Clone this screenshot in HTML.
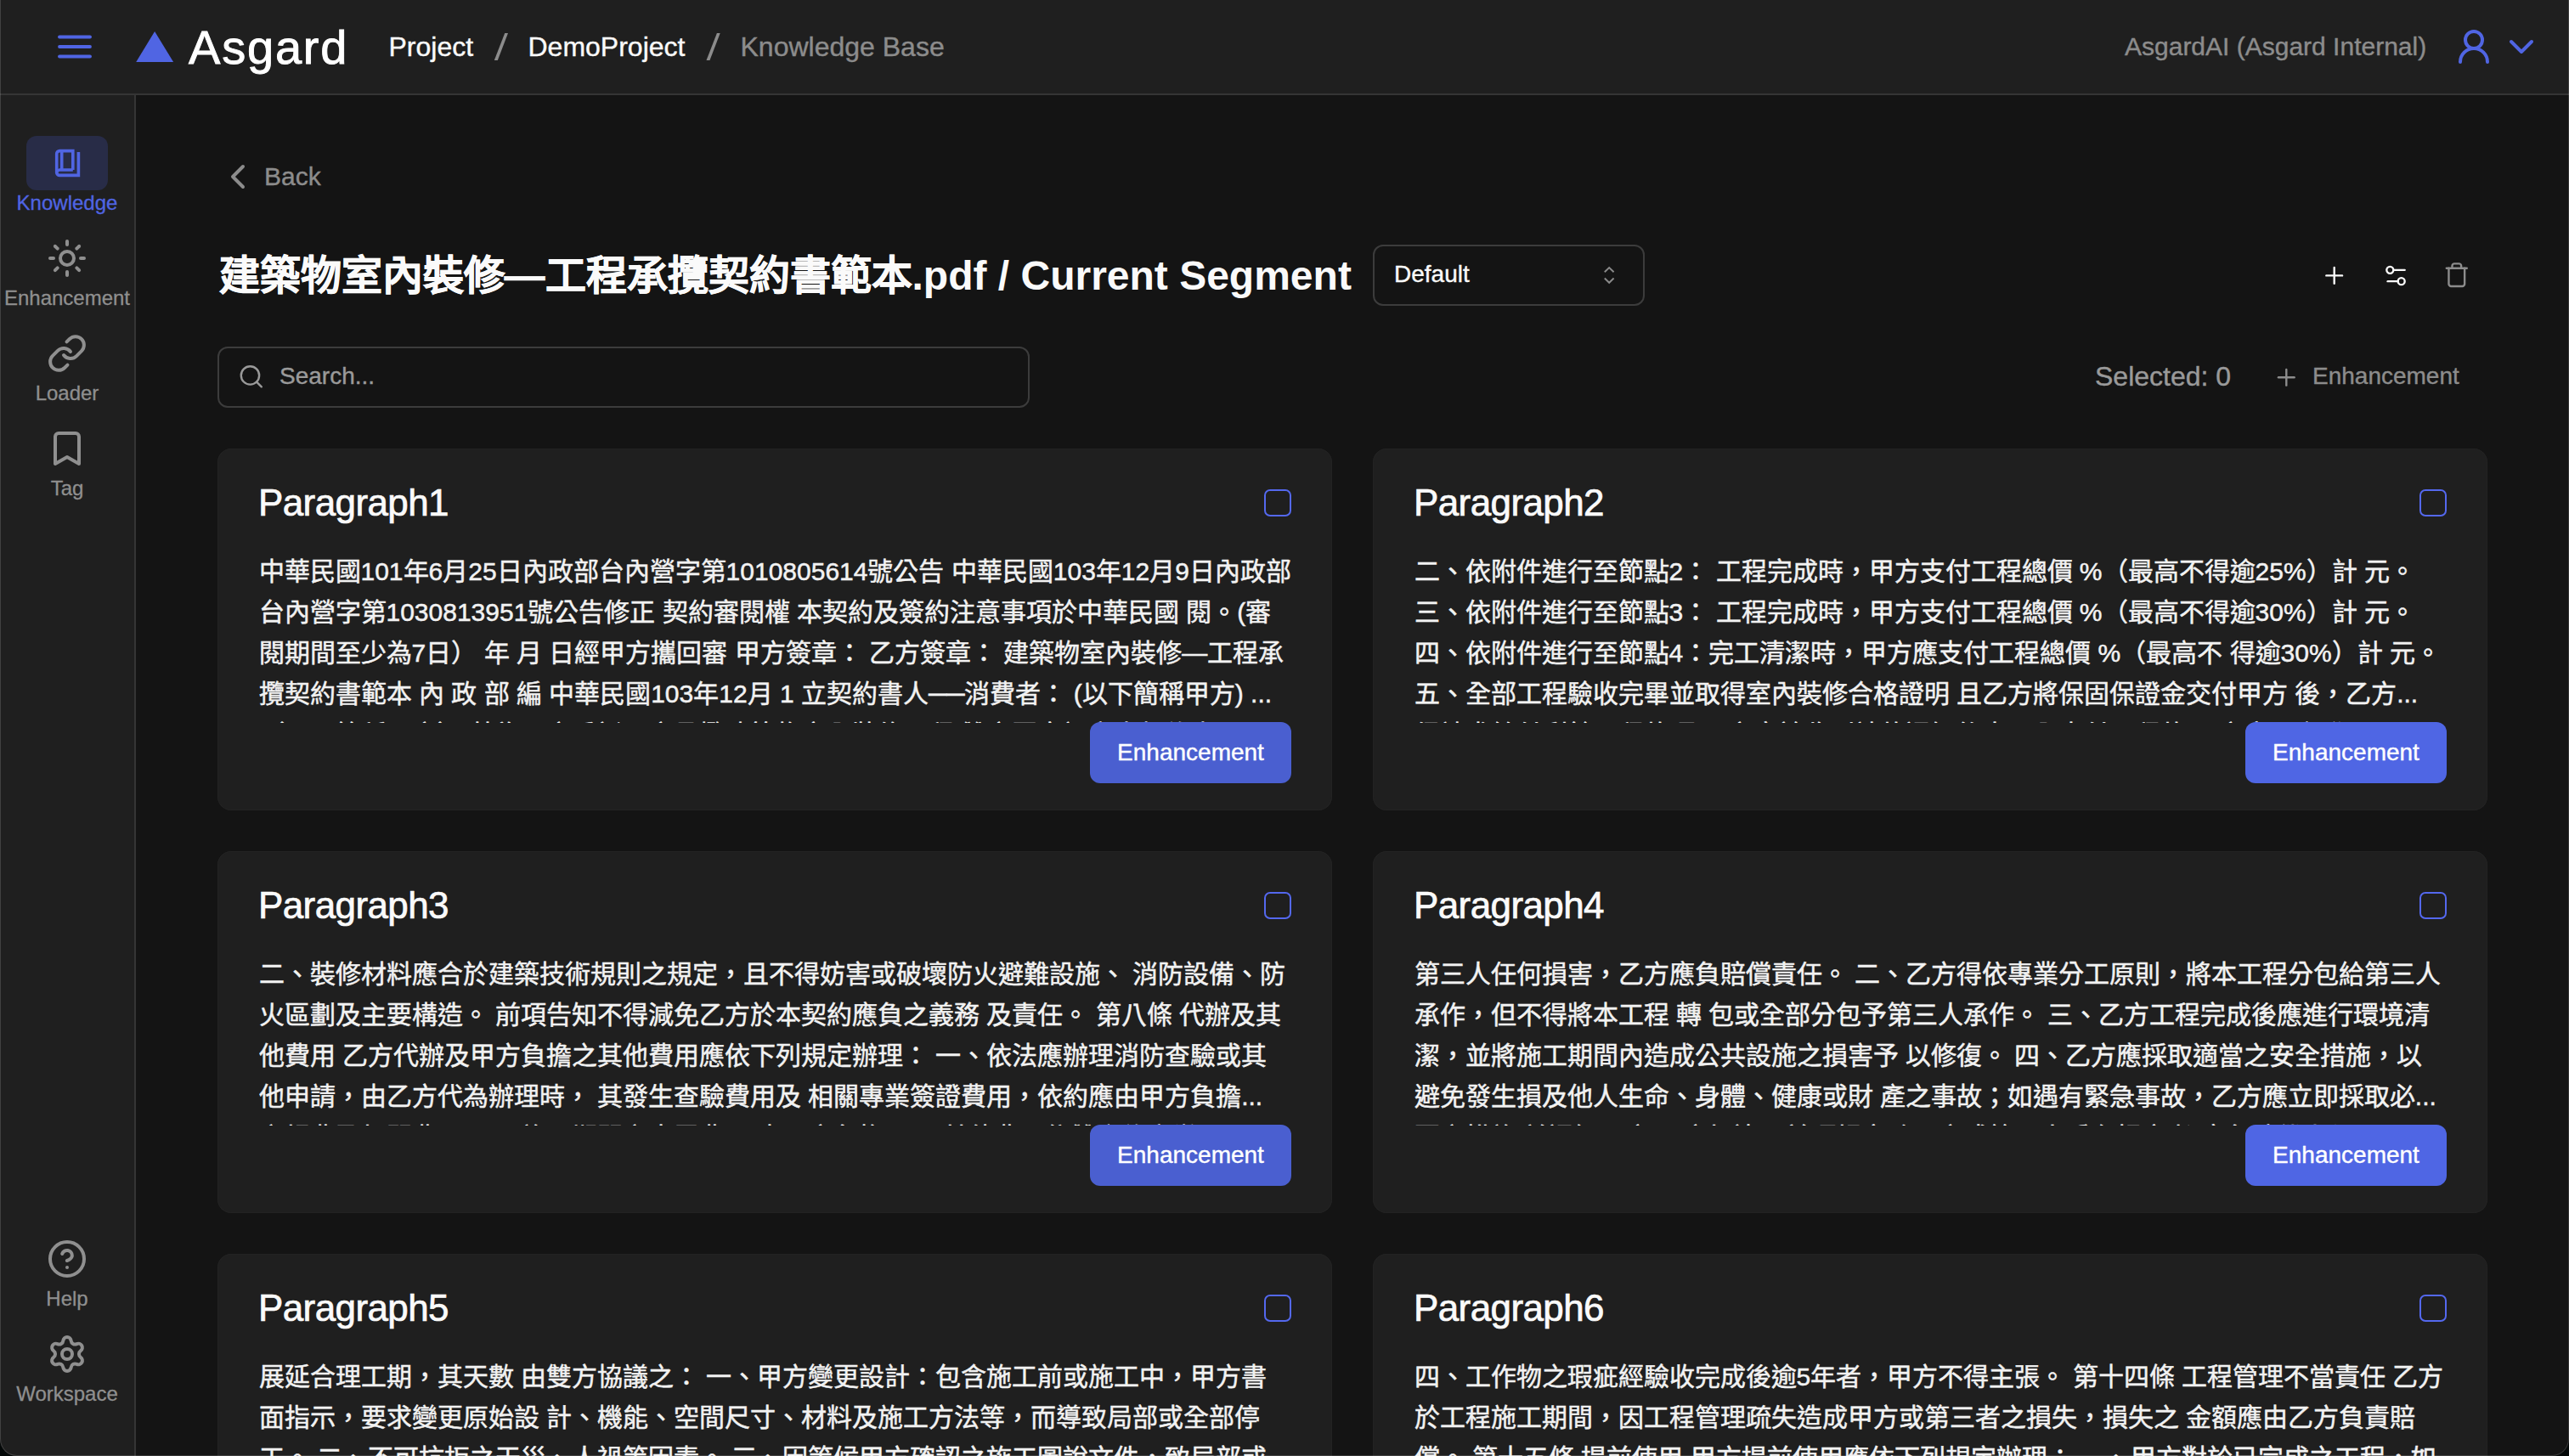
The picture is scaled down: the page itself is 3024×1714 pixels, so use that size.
<!DOCTYPE html>
<html lang="zh-TW">
<head>
<meta charset="utf-8">
<style>
html,body{margin:0;padding:0;}
body{width:3024px;height:1714px;overflow:hidden;background:#040808;font-family:"Liberation Sans",sans-serif;position:relative;}
#win{position:absolute;left:0;top:0;width:3024px;height:1714px;background:#141414;border-radius:0 0 20px 20px;overflow:hidden;}
.a{position:absolute;white-space:nowrap;-webkit-text-stroke:0.4px currentColor;}
#hdr{position:absolute;left:0;top:0;width:3024px;height:110px;background:#1f1f1f;border-bottom:2px solid #353535;}
#side{position:absolute;left:0;top:112px;width:158px;height:1602px;background:#1f1f1f;border-right:2px solid #353535;}
.card{position:absolute;width:1312px;height:426px;background:#1f1f1f;border-radius:16px;box-shadow:inset 0 0 0 1px #232323;overflow:hidden;}
.ptitle{position:absolute;left:48px;top:41.8px;font-size:44px;line-height:44px;color:#fafafa;letter-spacing:-0.6px;-webkit-text-stroke:0.7px #fafafa;}
.cb{position:absolute;left:1232px;top:48px;width:28px;height:28px;border:2px solid #5468ee;border-radius:7px;}
.body{position:absolute;left:48.5px;top:121px;width:1230px;height:202px;overflow:hidden;font-size:30px;line-height:48px;color:#f2f2f2;white-space:nowrap;-webkit-text-stroke:0.5px #f2f2f2;}
.btn{position:absolute;left:1027px;top:322px;width:237px;height:72px;border-radius:12px;background:#4a5fd0;color:#fff;font-size:28px;line-height:72px;text-align:center;-webkit-text-stroke:0.4px #fff;}
.card.r .btn{background:#4f66e4;}
.lbl{position:absolute;left:0;width:158px;text-align:center;font-size:24px;line-height:24px;color:#8f8f8f;-webkit-text-stroke:0.3px currentColor;}
svg.ic{position:absolute;left:0;top:0;overflow:visible;}
</style>
</head>
<body>
<div id="win">
  <!-- header -->
  <div id="hdr"></div>
  <!-- sidebar -->
  <div id="side"></div>
  <div class="a" style="left:31px;top:160px;width:96px;height:64px;border-radius:12px;background:#282c47;"></div>
  <div class="lbl" style="top:227px;color:#5065e3;">Knowledge</div>
  <div class="lbl" style="top:339px;">Enhancement</div>
  <div class="lbl" style="top:451px;">Loader</div>
  <div class="lbl" style="top:563px;">Tag</div>
  <div class="lbl" style="top:1517px;">Help</div>
  <div class="lbl" style="top:1629px;">Workspace</div>

  <!-- header text -->
  <div class="a" style="left:222px;top:27.7px;font-size:56px;line-height:56px;letter-spacing:1.8px;color:#fff;-webkit-text-stroke:0.9px #fff;">Asgard</div>
  <div class="a" style="left:457.5px;top:39px;font-size:32px;line-height:32px;color:#fafafa;">Project</div>
  <div class="a" style="left:621.5px;top:39px;font-size:32px;line-height:32px;color:#fafafa;">DemoProject</div>
  <div class="a" style="left:871.5px;top:39px;font-size:32px;line-height:32px;color:#8c8c8c;">Knowledge Base</div>
  <div class="a" style="left:2501px;top:39.5px;font-size:30px;line-height:30px;color:#8c8c8c;">AsgardAI (Asgard Internal)</div>

  <!-- main -->
  <div class="a" style="left:311px;top:193px;font-size:30px;line-height:30px;color:#8c8c8c;">Back</div>
  <div class="a" style="left:257.5px;top:301px;font-size:48px;line-height:48px;font-weight:bold;color:#fafafa;-webkit-text-stroke:0;"><span style="-webkit-text-stroke:0.6px #fafafa;">建築物室內裝修—工程承攬契約書範本</span>.pdf / Current Segment</div>
  <div class="a" style="left:1616px;top:288px;width:316px;height:68px;border:2px solid #3c3c3c;border-radius:12px;"></div>
  <div class="a" style="left:1641px;top:309px;font-size:28px;line-height:28px;color:#fafafa;">Default</div>

  <div class="a" style="left:256px;top:408px;width:952px;height:68px;border:2px solid #3c3c3c;border-radius:12px;"></div>
  <div class="a" style="left:329px;top:429px;font-size:28px;line-height:28px;color:#9a9a9a;">Search...</div>
  <div class="a" style="left:2466px;top:427px;font-size:32px;line-height:32px;color:#9a9a9a;">Selected: 0</div>
  <div class="a" style="left:2722px;top:429px;font-size:28px;line-height:28px;color:#8c8c8c;">Enhancement</div>

  <!-- cards -->
  <div class="card" style="left:256px;top:528px;">
    <div class="ptitle">Paragraph1</div>
    <div class="cb"></div>
    <div class="body">中華民國101年6月25日內政部台內營字第1010805614號公告 中華民國103年12月9日內政部<br>台內營字第1030813951號公告修正 契約審閱權 本契約及簽約注意事項於中華民國 閱。(審<br>閱期間至少為7日） 年 月 日經甲方攜回審 甲方簽章： 乙方簽章： 建築物室內裝修—工程承<br>攬契約書範本 內 政 部 編 中華民國103年12月 1 立契約書人──消費者： (以下簡稱甲方) ...<br>（以下簡稱乙方） 茲為甲方委託乙方承攬建築物室內裝修工程 雙方同意訂定本契約書</div>
    <div class="btn">Enhancement</div>
  </div>
  <div class="card r" style="left:1616px;top:528px;">
    <div class="ptitle">Paragraph2</div>
    <div class="cb"></div>
    <div class="body">二、依附件進行至節點2： 工程完成時，甲方支付工程總價 %（最高不得逾25%）計 元。<br>三、依附件進行至節點3： 工程完成時，甲方支付工程總價 %（最高不得逾30%）計 元。<br>四、依附件進行至節點4：完工清潔時，甲方應支付工程總價 %（最高不 得逾30%）計 元。<br>五、全部工程驗收完畢並取得室內裝修合格證明 且乙方將保固保證金交付甲方 後，乙方...<br>得請求給付剩餘工程款項 甲方應於收到請款通知後十日內支付工程款 乙方應開立發票</div>
    <div class="btn">Enhancement</div>
  </div>
  <div class="card" style="left:256px;top:1002px;">
    <div class="ptitle">Paragraph3</div>
    <div class="cb"></div>
    <div class="body">二、裝修材料應合於建築技術規則之規定，且不得妨害或破壞防火避難設施、 消防設備、防<br>火區劃及主要構造。 前項告知不得減免乙方於本契約應負之義務 及責任。 第八條 代辦及其<br>他費用 乙方代辦及甲方負擔之其他費用應依下列規定辦理： 一、依法應辦理消防查驗或其<br>他申請，由乙方代為辦理時， 其發生查驗費用及 相關專業簽證費用，依約應由甲方負擔...<br>之規費及相關費用 二、施工期間之水電費用 由乙方負擔 三、其他費用依雙方約定辦理</div>
    <div class="btn">Enhancement</div>
  </div>
  <div class="card r" style="left:1616px;top:1002px;">
    <div class="ptitle">Paragraph4</div>
    <div class="cb"></div>
    <div class="body">第三人任何損害，乙方應負賠償責任。 二、乙方得依專業分工原則，將本工程分包給第三人<br>承作，但不得將本工程 轉 包或全部分包予第三人承作。 三、乙方工程完成後應進行環境清<br>潔，並將施工期間內造成公共設施之損害予 以修復。 四、乙方應採取適當之安全措施，以<br>避免發生損及他人生命、身體、健康或財 產之事故；如遇有緊急事故，乙方應立即採取必...<br>要之措施 並通知甲方 乙方如違反前項規定致甲方或第三人受有損害者 應負賠償責任</div>
    <div class="btn">Enhancement</div>
  </div>
  <div class="card" style="left:256px;top:1476px;">
    <div class="ptitle">Paragraph5</div>
    <div class="cb"></div>
    <div class="body">展延合理工期，其天數 由雙方協議之： 一、甲方變更設計：包含施工前或施工中，甲方書<br>面指示，要求變更原始設 計、機能、空間尺寸、材料及施工方法等，而導致局部或全部停<br>工。 二、不可抗拒之天災、人禍等因素。 三、因等候甲方確認之施工圖說文件，致局部或<br>全部停工。 四、其他非可歸責於乙方之事由 第十條 遲延責任 乙方未能於約定期限內完工...</div>
    <div class="btn">Enhancement</div>
  </div>
  <div class="card r" style="left:1616px;top:1476px;">
    <div class="ptitle">Paragraph6</div>
    <div class="cb"></div>
    <div class="body">四、工作物之瑕疵經驗收完成後逾5年者，甲方不得主張。 第十四條 工程管理不當責任 乙方<br>於工程施工期間，因工程管理疏失造成甲方或第三者之損失，損失之 金額應由乙方負責賠<br>償。 第十五條 提前使用 甲方提前使用應依下列規定辦理： 一、甲方對於已完成之工程，如<br>需提前使用 應經雙方會同勘驗 並作成紀錄 乙方對提前使用部分之損害不負責任 甲方...</div>
    <div class="btn">Enhancement</div>
  </div>

  <!-- icons overlay -->
  <svg class="ic" width="3024" height="1714" viewBox="0 0 3024 1714" fill="none" stroke-linecap="round" stroke-linejoin="round">
    <!-- hamburger -->
    <g stroke="#5065e3" stroke-width="3.8">
      <line x1="70" y1="43.5" x2="106" y2="43.5"/>
      <line x1="70" y1="55" x2="106" y2="55"/>
      <line x1="70" y1="66.5" x2="106" y2="66.5"/>
    </g>
    <!-- logo triangle -->
    <polygon points="182.1,37 204.1,73.1 160.2,73.1" fill="#5065e3"/>
    <!-- breadcrumb slashes -->
    <polygon points="581.8,70.9 585.8,70.9 598,39.1 594.2,39.1" fill="#8c8c8c"/>
    <polygon points="831.5,70.9 835.5,70.9 847.7,39.1 843.9,39.1" fill="#8c8c8c"/>
    <!-- user round -->
    <g transform="translate(2888,31) scale(2)" stroke="#5065e3" stroke-width="2">
      <circle cx="12" cy="8" r="5"/><path d="M20 21a8 8 0 0 0-16 0"/>
    </g>
    <!-- chevron down -->
    <g transform="translate(2944,31) scale(2)" stroke="#5065e3" stroke-width="2">
      <path d="m6 9 6 6 6-6"/>
    </g>
    <!-- sidebar icons -->
    <g stroke="#5065e3" stroke-width="3.6" stroke-linecap="butt" stroke-linejoin="miter">
      <path d="M85.8 200 V177.6 H70.2 A3.5 3.5 0 0 0 66.7 181.1 V202.9 A3.5 3.5 0 0 0 70.2 206.4 H92.4 V179"/>
      <path d="M66.7 203.5 A3.5 3.5 0 0 1 70.2 200 H85.8"/>
      <path d="M72.7 177.6 V200"/>
    </g>
    <g transform="translate(55,280) scale(2)" stroke="#8f8f8f" stroke-width="2">
      <circle cx="12" cy="12" r="4"/><path d="M12 2v2"/><path d="M12 20v2"/><path d="m4.93 4.93 1.41 1.41"/><path d="m17.66 17.66 1.41 1.41"/><path d="M2 12h2"/><path d="M20 12h2"/><path d="m6.34 17.66-1.41 1.41"/><path d="m19.07 4.93-1.41 1.41"/>
    </g>
    <g transform="translate(55,392) scale(2)" stroke="#8f8f8f" stroke-width="2">
      <path d="M10 13a5 5 0 0 0 7.54.54l3-3a5 5 0 0 0-7.07-7.07l-1.72 1.71"/><path d="M14 11a5 5 0 0 0-7.54-.54l-3 3a5 5 0 0 0 7.07 7.07l1.71-1.71"/>
    </g>
    <g transform="translate(55,504) scale(2)" stroke="#8f8f8f" stroke-width="2">
      <path d="m19 21-7-4-7 4V5a2 2 0 0 1 2-2h10a2 2 0 0 1 2 2v16z"/>
    </g>
    <g transform="translate(55,1458) scale(2)" stroke="#8f8f8f" stroke-width="2">
      <circle cx="12" cy="12" r="10"/><path d="M9.09 9a3 3 0 0 1 5.83 1c0 2-3 3-3 3"/><path d="M12 17h.01"/>
    </g>
    <g transform="translate(55,1570) scale(2)" stroke="#8f8f8f" stroke-width="2">
      <path d="M9.671 4.136a2.34 2.34 0 0 1 4.659 0 2.34 2.34 0 0 0 3.319 1.915 2.34 2.34 0 0 1 2.33 4.033 2.34 2.34 0 0 0 0 3.831 2.34 2.34 0 0 1-2.33 4.033 2.34 2.34 0 0 0-3.319 1.915 2.34 2.34 0 0 1-4.659 0 2.34 2.34 0 0 0-3.32-1.915 2.34 2.34 0 0 1-2.33-4.033 2.34 2.34 0 0 0 0-3.831A2.34 2.34 0 0 1 6.35 6.051a2.34 2.34 0 0 0 3.319-1.915"/><circle cx="12" cy="12" r="3"/>
    </g>
    <!-- back chevron -->
    <g transform="translate(256,184) scale(2)" stroke="#8c8c8c" stroke-width="2">
      <path d="m15 18-6-6 6-6"/>
    </g>
    <!-- select chevrons -->
    <g stroke="#8a8a8a" stroke-width="1.9" stroke-linecap="butt" stroke-linejoin="miter">
      <path d="M1888.8 320.3 L1894.2 315 L1899.6 320.3"/>
      <path d="M1888.8 327.5 L1894.2 332.8 L1899.6 327.5"/>
    </g>
    <!-- toolbar icons -->
    <g transform="translate(2731.7,308.4) scale(1.3333)" stroke="#fafafa" stroke-width="1.8">
      <path d="M5 12h14"/><path d="M12 5v14"/>
    </g>
    <g transform="translate(2804,308.5) scale(1.3333)" stroke="#fafafa" stroke-width="1.8">
      <path d="M20 7h-9"/><path d="M14 17H5"/><circle cx="17" cy="17" r="3"/><circle cx="7" cy="7" r="3"/>
    </g>
    <g transform="translate(2875.8,307.7) scale(1.3333)" stroke="#8c8c8c" stroke-width="1.8">
      <path d="M3 6h18"/><path d="M19 6v14c0 1-1 2-2 2H7c-1 0-2-1-2-2V6"/><path d="M8 6V4c0-1 1-2 2-2h4c1 0 2 1 2 2v2"/>
    </g>
    <!-- search -->
    <g transform="translate(279.8,427.3) scale(1.3333)" stroke="#9a9a9a" stroke-width="1.8">
      <circle cx="11" cy="11" r="8"/><path d="m21 21-4.3-4.3"/>
    </g>
    <!-- plus gray -->
    <g transform="translate(2675.3,428.3) scale(1.3333)" stroke="#8c8c8c" stroke-width="1.8">
      <path d="M5 12h14"/><path d="M12 5v14"/>
    </g>
  </svg>
</div>
<!-- window edge -->
<div class="a" style="left:0;top:0;width:3022px;height:1713px;border:1px solid rgba(255,255,255,0.15);border-top:none;border-radius:0 0 20px 20px;pointer-events:none;"></div>
</body>
</html>
